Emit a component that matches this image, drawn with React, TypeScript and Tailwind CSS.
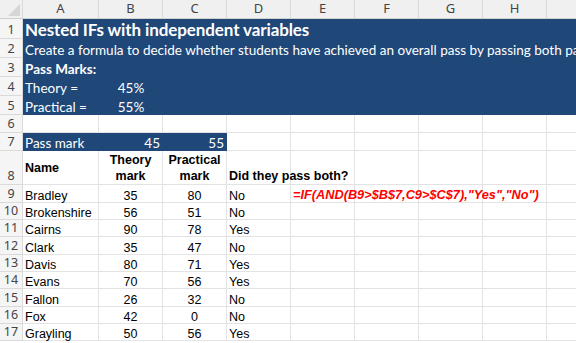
import React from "react";

const BLUE = "bg-[#1f4778]";
const colLetters = ["A", "B", "C", "D", "E", "F", "G", "H", "I"];
const colW = ["w-[76px]", "w-[64px]", "w-[64px]", "w-[64px]", "w-[64px]", "w-[64px]", "w-[64px]", "w-[64px]", "w-[64px]"];

const calibri = { fontFamily: "Lato, 'Open Sans', sans-serif" } as const;
const arial = { fontFamily: "'Liberation Sans', Arial, sans-serif" } as const;
const ui = { fontFamily: "'Noto Sans', 'Open Sans', sans-serif" } as const;

function RowHead({ n, h }: { n: number; h: string }) {
  return (
    <div
      className={`w-[23px] shrink-0 ${h} bg-[#f5f5f5] border-r border-b border-[#dadada] flex items-end justify-center text-[12.5px] leading-none text-[#444] pb-[2px]`}
      style={ui}
    >
      {n}
    </div>
  );
}

function EmptyCells({ from, h }: { from: number; h: string }) {
  return (
    <>
      {colW.slice(from).map((w, i) => (
        <div key={i} className={`${w} shrink-0 ${h} border-r border-b border-[#e3e3e3]`} />
      ))}
    </>
  );
}

function BlueRow({ n, h, children }: { n: number; h: string; children?: React.ReactNode }) {
  return (
    <div className="flex">
      <RowHead n={n} h={h} />
      <div className={`flex-1 shrink-0 ${h} ${BLUE} text-white flex items-end pb-[1px] pl-[2px] whitespace-nowrap`} style={calibri}>
        {children}
      </div>
    </div>
  );
}

const data: [string, number, number, string][] = [
  ["Bradley", 35, 80, "No"],
  ["Brokenshire", 56, 51, "No"],
  ["Cairns", 90, 78, "Yes"],
  ["Clark", 35, 47, "No"],
  ["Davis", 80, 71, "Yes"],
  ["Evans", 70, 56, "Yes"],
  ["Fallon", 26, 32, "No"],
  ["Fox", 42, 0, "No"],
  ["Grayling", 50, 56, "Yes"],
];
const dataH = ["h-[18px]", "h-[17px]", "h-[17px]", "h-[18px]", "h-[17px]", "h-[17px]", "h-[18px]", "h-[17px]", "h-[17px]"];

const bodyText = "text-[13.5px] leading-none";

export default function App() {
  return (
    <div className="w-[576px] h-[343px] overflow-hidden bg-white">
      <div className="w-[700px]">
        {/* column header */}
        <div className="flex h-[19px] bg-[#f0f0f0] border-b border-[#d0d0d0]">
          <div className="w-[23px] shrink-0 relative border-r border-[#dadada]">
            <div className="absolute right-[2px] bottom-[2px] w-0 h-0 border-l-[12px] border-l-transparent border-b-[12px] border-b-[#d6d6d6]" />
          </div>
          {colLetters.map((c, i) => (
            <div
              key={c}
              className={`${colW[i]} shrink-0 border-r border-[#dadada] flex items-center justify-center text-[13px] text-[#444]`}
              style={ui}
            >
              {c}
            </div>
          ))}
        </div>

        <BlueRow n={1} h="h-[20px]">
          <span className="text-[17px] font-bold leading-none tracking-[-0.1px]">Nested IFs with independent variables</span>
        </BlueRow>
        <BlueRow n={2} h="h-[19px]">
          <span className={bodyText}>
            Create a formula to decide whether students have achieved an overall pass by passing both parts
          </span>
        </BlueRow>
        <BlueRow n={3} h="h-[19px]">
          <span className={`${bodyText} font-bold`}>Pass Marks:</span>
        </BlueRow>
        <BlueRow n={4} h="h-[19px]">
          <span className={`w-[74px] ${bodyText}`}>Theory =</span>
          <span className={`w-[64px] text-center ${bodyText}`}>45%</span>
        </BlueRow>
        <BlueRow n={5} h="h-[19px]">
          <span className={`w-[74px] ${bodyText}`}>Practical =</span>
          <span className={`w-[64px] text-center ${bodyText}`}>55%</span>
        </BlueRow>

        {/* row 6 */}
        <div className="flex">
          <RowHead n={6} h="h-[18px]" />
          <EmptyCells from={0} h="h-[18px]" />
        </div>

        {/* row 7 */}
        <div className="flex">
          <RowHead n={7} h="h-[18px]" />
          <div className={`w-[204px] shrink-0 h-[18px] ${BLUE} text-white flex items-end pb-[1px] ${bodyText}`} style={calibri}>
            <span className="w-[76px] pl-[2px]">Pass mark</span>
            <span className="w-[64px] text-right pr-[3px]">45</span>
            <span className="w-[64px] text-right pr-[3px]">55</span>
          </div>
          <EmptyCells from={3} h="h-[18px]" />
        </div>

        {/* row 8 */}
        <div className="flex" style={arial}>
          <RowHead n={8} h="h-[34px]" />
          <div className="w-[76px] shrink-0 h-[34px] border-r border-b border-[#e3e3e3] flex items-center pl-[2px] pt-[2px] text-[12.5px] font-bold text-black">
            Name
          </div>
          <div className="w-[64px] shrink-0 h-[34px] border-r border-b border-[#e3e3e3] flex items-end justify-center text-center pb-0 text-[12.5px] font-bold leading-[16px] text-black">
            Theory
            <br />
            mark
          </div>
          <div className="w-[64px] shrink-0 h-[34px] border-r border-b border-[#e3e3e3] flex items-end justify-center text-center pb-0 text-[12.5px] font-bold leading-[16px] text-black">
            Practical
            <br />
            mark
          </div>
          <div className="w-[64px] shrink-0 h-[34px] border-r border-b border-[#e3e3e3] flex items-end pb-[2px] pl-[2px] text-[12.5px] font-bold leading-none text-black whitespace-nowrap relative z-10">
            Did they pass both?
          </div>
          <EmptyCells from={4} h="h-[34px]" />
        </div>

        {data.map(([name, t, p, r], i) => {
          const h = dataH[i];
          return (
            <div className="flex" style={arial} key={name}>
              <RowHead n={9 + i} h={h} />
              <div className={`w-[76px] shrink-0 ${h} border-r border-b border-[#e3e3e3] flex items-end pl-[2px] pb-0 text-[12.5px] leading-none text-black`}>
                {name}
              </div>
              <div className={`w-[64px] shrink-0 ${h} border-r border-b border-[#e3e3e3] flex items-end justify-center pb-0 text-[12.5px] leading-none text-black`}>
                {t}
              </div>
              <div className={`w-[64px] shrink-0 ${h} border-r border-b border-[#e3e3e3] flex items-end justify-center pb-0 text-[12.5px] leading-none text-black`}>
                {p}
              </div>
              <div className={`w-[64px] shrink-0 ${h} border-r border-b border-[#e3e3e3] flex items-end pl-[2px] pb-0 text-[12.5px] leading-none text-black`}>
                {r}
              </div>
              <div className={`w-[64px] shrink-0 ${h} border-r border-b border-[#e3e3e3] relative`}>
                {i === 0 && (
                  <span className="absolute left-[2px] bottom-0 whitespace-nowrap text-[12.75px] leading-none font-bold italic text-[#ff0000]">
                    =IF(AND(B9&gt;$B$7,C9&gt;$C$7),"Yes","No")
                  </span>
                )}
              </div>
              <EmptyCells from={5} h={h} />
            </div>
          );
        })}
      </div>
    </div>
  );
}
